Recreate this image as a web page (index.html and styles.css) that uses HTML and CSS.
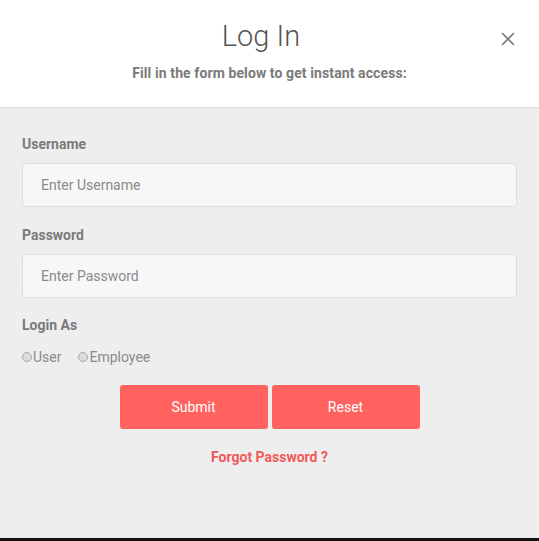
FILE: index.html
```html
<!DOCTYPE html>
<html>
<head>
<meta charset="utf-8">
<link rel="stylesheet" href="styles.css">
</head>
<body>
<div class="modal">
  <div class="header">
    <h1 class="title">Log In</h1>
    <p class="subtitle">Fill in the form below to get instant access:</p>
    <span class="close">
      <svg width="14" height="14" viewBox="0 0 14 14"><path d="M1 1L13 13M13 1L1 13" stroke="#7a7a7a" stroke-width="1.6" fill="none"/></svg>
    </span>
  </div>
  <div class="body">
    <label class="label">Username</label>
    <input class="input" type="text" placeholder="Enter Username">
    <label class="label">Password</label>
    <input class="input" type="password" placeholder="Enter Password">
    <div class="label label-as">Login As</div>
    <div class="radios">
      <label class="radio"><span class="dot"></span>User</label>
      <label class="radio"><span class="dot"></span>Employee</label>
    </div>
    <div class="buttons">
      <button class="btn">Submit</button>
      <button class="btn">Reset</button>
    </div>
    <a class="forgot">Forgot Password ?</a>
  </div>
  <div class="bottom"></div>
</div>
</body>
</html>
```
FILE: styles.css
```css
* { box-sizing: border-box; }
html, body { margin: 0; padding: 0; }
body {
  font-family: Roboto, "Liberation Sans", sans-serif;
  background: #eeeeee;
  width: 539px;
  height: 541px;
  overflow: hidden;
}
.modal {
  display: flex;
  flex-direction: column;
  height: 541px;
}
.header {
  position: relative;
  background: #fff;
  height: 108px;
  border-bottom: 1px solid #dcdcdc;
  text-align: center;
  padding-top: 18px;
}
.title {
  margin: 0;
  padding-right: 17px;
  font-weight: 300;
  font-size: 29px;
  line-height: 36px;
  color: #555;
}
.subtitle {
  margin: 11px 0 0;
  font-weight: 700;
  font-size: 14px;
  letter-spacing: 0.1px;
  line-height: 16px;
  color: #7a7a7a;
}
.close {
  position: absolute;
  right: 24px;
  top: 32px;
  width: 14px;
  height: 14px;
  display: block;
}
.close svg { display: block; }
.body {
  flex: 1;
  display: flex;
  flex-direction: column;
  padding: 26px 22px 0;
}
.label {
  display: block;
  font-weight: 700;
  font-size: 14px;
  line-height: 20px;
  color: #7a7a7a;
  margin-bottom: 9px;
}
.label-as {
  margin-top: -1px;
}
.input {
  display: block;
  width: 495px;
  height: 44px;
  background: #f7f7f7;
  border: 1px solid #dedede;
  border-radius: 3px;
  padding: 0 18px;
  font-family: Roboto, "Liberation Sans", sans-serif;
  font-size: 14px;
  color: #555;
  margin-bottom: 18px;
  outline: none;
}
.input::placeholder { color: #8a8a8a; }
.radios {
  display: flex;
  gap: 17px;
  margin-top: 3px;
  font-size: 14px;
  color: #8a8a8a;
  line-height: 20px;
}
.radio {
  display: flex;
  align-items: center;
}
.dot {
  width: 10px;
  height: 10px;
  border-radius: 50%;
  border: 1px solid #a8a8a8;
  background: #dcdcdc;
  margin-right: 1px;
}
.buttons {
  display: flex;
  justify-content: center;
  gap: 4px;
  margin-top: 18px;
}
.btn {
  width: 148px;
  height: 44px;
  background: #ff625f;
  border: none;
  border-radius: 3px;
  color: #fff;
  font-family: Roboto, "Liberation Sans", sans-serif;
  font-size: 14px;
}
.forgot {
  display: block;
  text-align: center;
  margin-top: 18px;
  font-weight: 700;
  font-size: 14px;
  line-height: 20px;
  color: #f25a5a;
}
.bottom {
  height: 3px;
  background: #111;
}
```
